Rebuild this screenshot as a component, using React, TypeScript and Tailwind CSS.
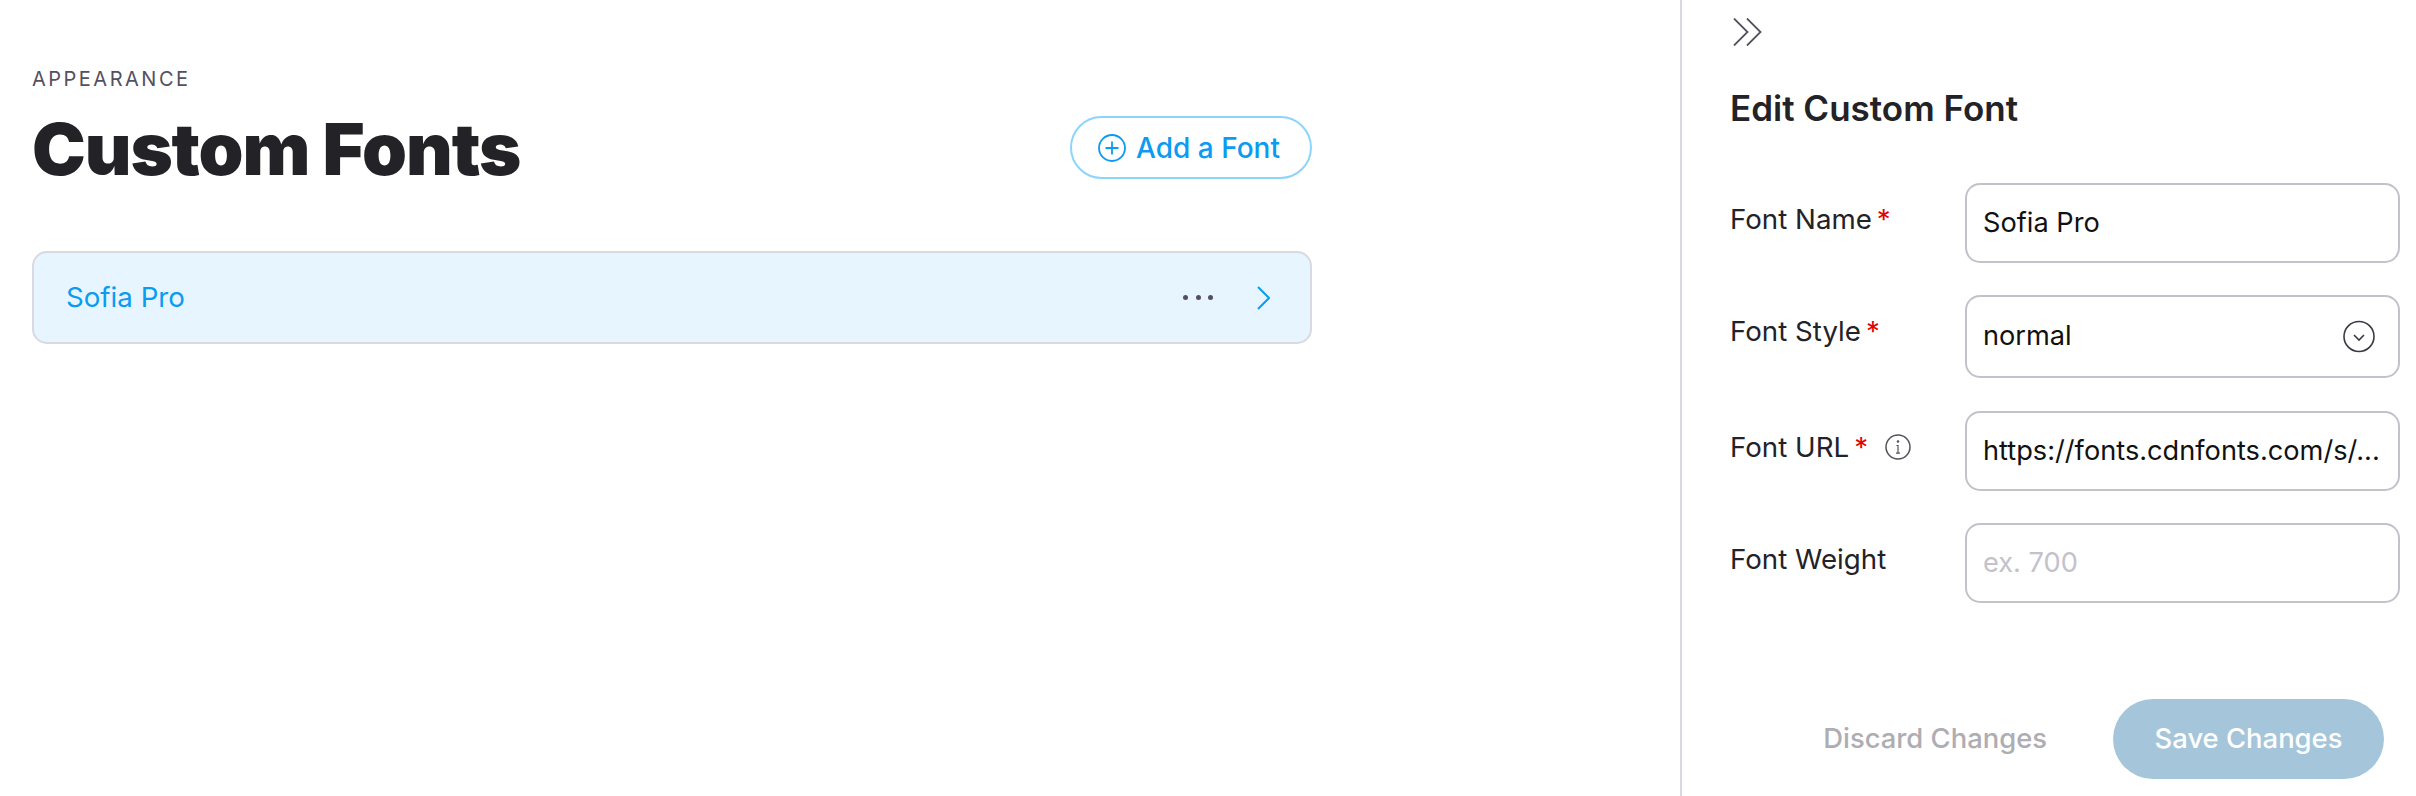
import React from "react";

const font = { fontFamily: "Inter, 'Liberation Sans', sans-serif" };

function Label({ text, required, info }: { text: string; required?: boolean; info?: boolean }) {
  return (
    <div className="flex w-[235px] shrink-0 items-center pt-[19px] self-start text-[27.7px] leading-[34px] text-[#232227]">
      <span>{text}</span>
      {required && <span className="ml-[5px] text-[#e60000] leading-[34px]">*</span>}
      {info && (
        <svg className="ml-[17px]" width="26" height="26" viewBox="0 0 26 26" fill="none" stroke="#55505e" strokeWidth="1.5">
          <circle cx="13" cy="13" r="12" />
          <path d="M11.5 11.5H13V19M11 19.2h4" strokeWidth="1.2" />
          <circle cx="13" cy="7.5" r="0.6" fill="#55505e" />
        </svg>
      )}
    </div>
  );
}

function Field({ children, h }: { children: React.ReactNode; h: string }) {
  return (
    <div className={`flex w-[435px] items-center justify-between rounded-[15px] border-2 border-[#c3c2cb] bg-white pl-[16px] pr-[23px] text-[27.2px] text-[#111] ${h}`}>
      {children}
    </div>
  );
}

export default function App() {
  return (
    <div className="flex h-[796px] w-[2416px] overflow-hidden bg-white" style={font}>
      <main className="w-[1680px] shrink-0 pl-[32px] pt-[66px]">
        <div className="w-[1280px]">
          <div className="text-[20px] leading-[26px] tracking-[2.5px] text-[#55505e]">APPEARANCE</div>
          <div className="mt-[14px] flex items-center justify-between">
            <h1 className="text-[72px] font-black leading-[86px] tracking-[-1.1px] text-[#232227]">Custom Fonts</h1>
            <button className="mb-[3px] flex h-[63px] w-[242px] items-center justify-center gap-[10px] rounded-full border-2 border-[#8dd4fb] bg-white pr-[4px] text-[28px] font-medium text-[#0b9bf0]">
              <svg width="28" height="28" viewBox="0 0 28 28" fill="none" stroke="#0b9bf0" strokeWidth="1.8">
                <circle cx="14" cy="14" r="13" />
                <path d="M14 7.5v13M7.5 14h13" />
              </svg>
              Add a Font
            </button>
          </div>
          <div className="mt-[59px] flex h-[93px] items-center justify-between rounded-[15px] border-2 border-[#dad8e1] bg-[#e6f5ff] pl-[32px] pr-[40px]">
            <span className="text-[27.7px] text-[#0b9bf0]">Sofia Pro</span>
            <div className="flex items-center gap-[44px]">
              <div className="flex gap-[7.5px]">
                <span className="h-[5px] w-[5px] rounded-full bg-[#55505e]" />
                <span className="h-[5px] w-[5px] rounded-full bg-[#55505e]" />
                <span className="h-[5px] w-[5px] rounded-full bg-[#55505e]" />
              </div>
              <svg width="13" height="24" viewBox="0 0 13 24" fill="none" stroke="#0b9bf0" strokeWidth="2">
                <path d="M1 1l11 11L1 23" />
              </svg>
            </div>
          </div>
        </div>
      </main>
      <aside className="flex-1 border-l-2 border-[#d9d8df] pl-[48px] pr-[16px] pt-[18px]">
        <svg className="block" width="32" height="28" viewBox="0 0 32 28" fill="none" stroke="#55505e" strokeWidth="1.8">
          <path d="M4 0.5L17.5 14 4 27.5M17 0.5L30.5 14 17 27.5" />
        </svg>
        <h2 className="mt-[41px] text-[35px] font-semibold leading-[42px] text-[#232227]">Edit Custom Font</h2>
        <div className="mt-[54px] flex flex-col">
          <div className="flex">
            <Label text="Font Name" required />
            <Field h="h-[80px]">Sofia Pro</Field>
          </div>
          <div className="mt-[32px] flex">
            <Label text="Font Style" required />
            <Field h="h-[83px]">
              normal
              <svg width="32" height="33" viewBox="0 0 32 33" fill="none" stroke="#3c3842" strokeWidth="1.6">
                <circle cx="16" cy="16.5" r="15" />
                <path d="M11 15l5 5 5-5" />
              </svg>
            </Field>
          </div>
          <div className="mt-[33px] flex">
            <Label text="Font URL" required info />
            <Field h="h-[80px]">https://fonts.cdnfonts.com/s/...</Field>
          </div>
          <div className="mt-[32px] flex">
            <Label text="Font Weight" />
            <Field h="h-[80px]"><span className="text-[#c3c2cb]">ex. 700</span></Field>
          </div>
        </div>
        <div className="mt-[96px] flex items-center justify-end pr-[16px]">
          <button className="text-[27.4px] font-medium text-[#aeadb3]">Discard Changes</button>
          <button className="ml-[66px] h-[80px] w-[271px] rounded-full bg-[#a5c6da] text-[27.4px] font-medium text-white">Save Changes</button>
        </div>
      </aside>
    </div>
  );
}
